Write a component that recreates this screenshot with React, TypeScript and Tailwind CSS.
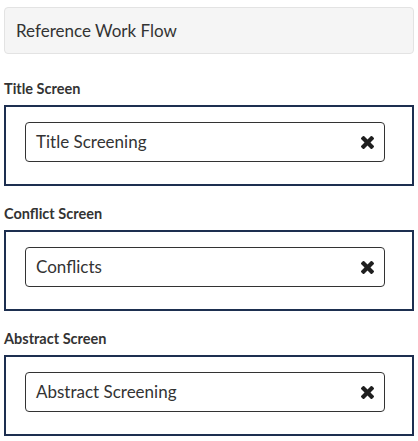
import React from "react";

const screens = [
  { label: "Title Screen", value: "Title Screening" },
  { label: "Conflict Screen", value: "Conflicts" },
  { label: "Abstract Screen", value: "Abstract Screening" },
];

// Font Awesome 4 "times" glyph
function TimesIcon() {
  return (
    <svg
      viewBox="302 366 1188 1188"
      width="13"
      height="13"
      className="fill-[#1f1f1f]"
      aria-hidden="true"
    >
      <path
        transform="matrix(1 0 0 -1 0 1920)"
        d="M1490 598q0 -40 -28 -68l-136 -136q-28 -28 -68 -28t-68 28l-294 294l-294 -294q-28 -28 -68 -28t-68 28l-136 136q-28 28 -28 68t28 68l294 294l-294 294q-28 28 -28 68t28 68l136 136q28 28 68 28t68 -28l294 -294l294 294q28 28 68 28t68 -28l136 -136q28 -28 28 -68t-28 -68l-294 -294l294 -294q28 -28 28 -68z"
      />
    </svg>
  );
}

export default function App() {
  return (
    <div
      className="min-h-screen bg-white px-[4px] pt-[7px] text-[#333333]"
      style={{ fontFamily: "Lato, 'Noto Sans', sans-serif" }}
    >
      <div className="flex h-[47px] items-center rounded-[4px] border border-[#e3e3e3] bg-[#f5f5f5] pl-[11px] text-[17px]">
        Reference Work Flow
      </div>

      {screens.map((screen, index) => (
        <div key={screen.label}>
          <div
            className={`${
              index === 0 ? "mt-[25px]" : "mt-[18px]"
            } mb-[6px] text-[14.5px] font-bold leading-[20px]`}
          >
            {screen.label}
          </div>
          <div className="h-[81px] border-2 border-[#1d2f50] pl-[19px] pr-[27px] pt-[15px]">
            <div className="flex h-[40px] items-center justify-between rounded-[4px] border border-[#333333] pl-[10px] pr-[10px] text-[17px]">
              <span>{screen.value}</span>
              <TimesIcon />
            </div>
          </div>
        </div>
      ))}
    </div>
  );
}
